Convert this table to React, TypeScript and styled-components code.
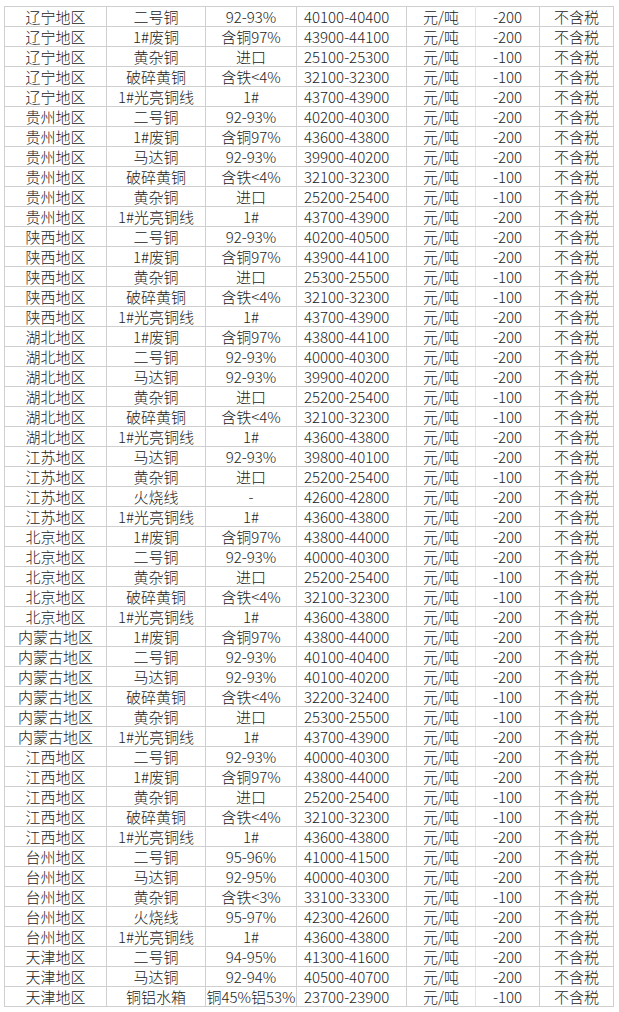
import React from 'react'
import styled, { createGlobalStyle } from 'styled-components'

const GlobalStyle = createGlobalStyle`
  html, body {
    margin: 0;
    padding: 0;
    background: #ffffff;
  }
`

// 地区 品名 规格 价格 涨跌
const RAW = `
辽宁地区 二号铜 92-93% 40100-40400 -200
辽宁地区 1#废铜 含铜97% 43900-44100 -200
辽宁地区 黄杂铜 进口 25100-25300 -100
辽宁地区 破碎黄铜 含铁<4% 32100-32300 -100
辽宁地区 1#光亮铜线 1# 43700-43900 -200
贵州地区 二号铜 92-93% 40200-40300 -200
贵州地区 1#废铜 含铜97% 43600-43800 -200
贵州地区 马达铜 92-93% 39900-40200 -200
贵州地区 破碎黄铜 含铁<4% 32100-32300 -100
贵州地区 黄杂铜 进口 25200-25400 -100
贵州地区 1#光亮铜线 1# 43700-43900 -200
陕西地区 二号铜 92-93% 40200-40500 -200
陕西地区 1#废铜 含铜97% 43900-44100 -200
陕西地区 黄杂铜 进口 25300-25500 -100
陕西地区 破碎黄铜 含铁<4% 32100-32300 -100
陕西地区 1#光亮铜线 1# 43700-43900 -200
湖北地区 1#废铜 含铜97% 43800-44100 -200
湖北地区 二号铜 92-93% 40000-40300 -200
湖北地区 马达铜 92-93% 39900-40200 -200
湖北地区 黄杂铜 进口 25200-25400 -100
湖北地区 破碎黄铜 含铁<4% 32100-32300 -100
湖北地区 1#光亮铜线 1# 43600-43800 -200
江苏地区 马达铜 92-93% 39800-40100 -200
江苏地区 黄杂铜 进口 25200-25400 -100
江苏地区 火烧线 - 42600-42800 -200
江苏地区 1#光亮铜线 1# 43600-43800 -200
北京地区 1#废铜 含铜97% 43800-44000 -200
北京地区 二号铜 92-93% 40000-40300 -200
北京地区 黄杂铜 进口 25200-25400 -100
北京地区 破碎黄铜 含铁<4% 32100-32300 -100
北京地区 1#光亮铜线 1# 43600-43800 -200
内蒙古地区 1#废铜 含铜97% 43800-44000 -200
内蒙古地区 二号铜 92-93% 40100-40400 -200
内蒙古地区 马达铜 92-93% 40100-40200 -200
内蒙古地区 破碎黄铜 含铁<4% 32200-32400 -100
内蒙古地区 黄杂铜 进口 25300-25500 -100
内蒙古地区 1#光亮铜线 1# 43700-43900 -200
江西地区 二号铜 92-93% 40000-40300 -200
江西地区 1#废铜 含铜97% 43800-44000 -200
江西地区 黄杂铜 进口 25200-25400 -100
江西地区 破碎黄铜 含铁<4% 32100-32300 -100
江西地区 1#光亮铜线 1# 43600-43800 -200
台州地区 二号铜 95-96% 41000-41500 -200
台州地区 马达铜 92-95% 40000-40300 -200
台州地区 黄杂铜 含铁<3% 33100-33300 -100
台州地区 火烧线 95-97% 42300-42600 -200
台州地区 1#光亮铜线 1# 43600-43800 -200
天津地区 二号铜 94-95% 41300-41600 -200
天津地区 马达铜 92-94% 40500-40700 -200
天津地区 铜铝水箱 铜45%铝53% 23700-23900 -100
`

const rows = RAW.trim()
  .split('\n')
  .map((line) => {
    const [region, name, spec, price, diff] = line.split(' ')
    return { region, name, spec, price, unit: '元/吨', diff, tax: '不含税' }
  })

const colWidths = [102, 99, 91, 110, 69, 64, 74]

const Page = styled.div`
  padding: 6px 0 0 4px;
`

const Table = styled.table`
  border-collapse: collapse;
  table-layout: fixed;
  width: 610px;
  font-family: 'Noto Sans CJK SC', 'Noto Sans', sans-serif;
  font-size: 15px;
  font-weight: 300;
  color: #222222;
`

const Cell = styled.td<{ $left?: boolean; $faint?: boolean }>`
  height: 19px;
  padding: ${(p) => (p.$left ? '0 0 0 7px' : '0')};
  line-height: 19px;
  border: 1px solid #cfcfcf;
  border-right-color: ${(p) => (p.$faint ? '#e4e4e4' : '#cfcfcf')};
  text-align: ${(p) => (p.$left ? 'left' : 'center')};
  white-space: nowrap;
  overflow: hidden;
`

export default function App() {
  return (
    <Page>
      <GlobalStyle />
      <Table>
        <colgroup>
          {colWidths.map((w, i) => (
            <col key={i} style={{ width: w }} />
          ))}
        </colgroup>
        <tbody>
          {rows.map((r, i) => (
            <tr key={i}>
              <Cell>{r.region}</Cell>
              <Cell>{r.name}</Cell>
              <Cell>{r.spec}</Cell>
              <Cell $left>{r.price}</Cell>
              <Cell $faint>{r.unit}</Cell>
              <Cell>{r.diff}</Cell>
              <Cell>{r.tax}</Cell>
            </tr>
          ))}
        </tbody>
      </Table>
    </Page>
  )
}
